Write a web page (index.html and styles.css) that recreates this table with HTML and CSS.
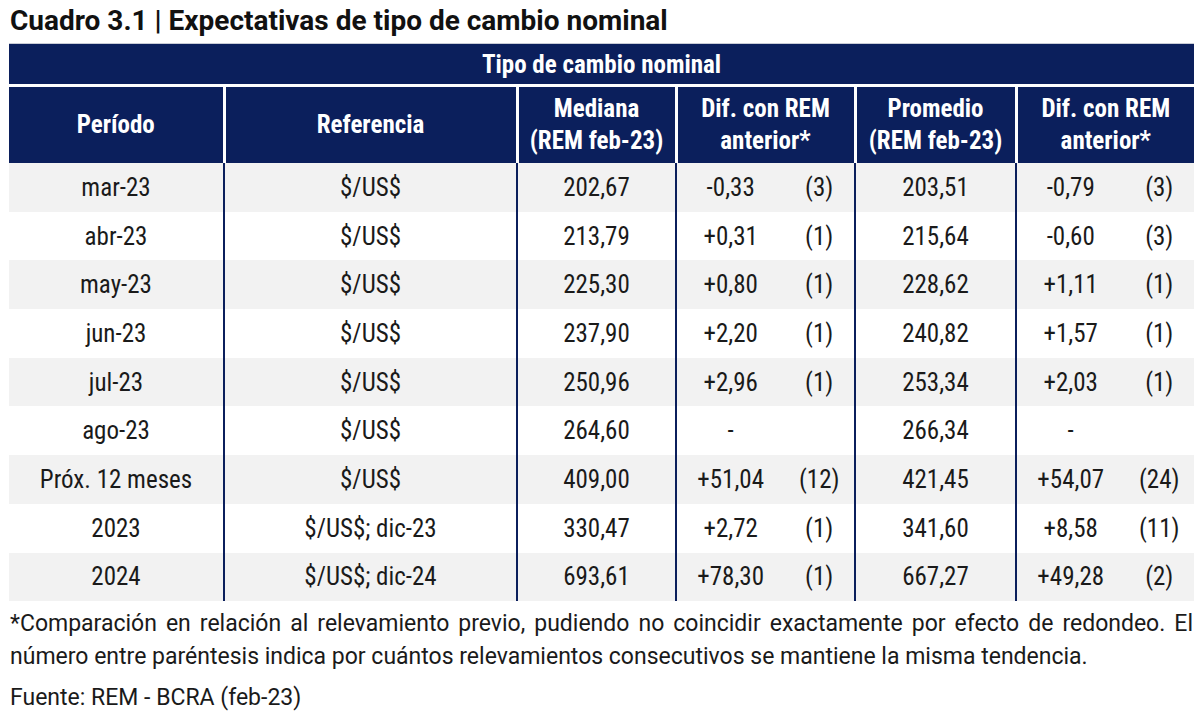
FILE: index.html
```html
<!DOCTYPE html>
<html lang="es">
<head>
<meta charset="utf-8">
<title>Cuadro 3.1</title>
<link rel="stylesheet" href="styles.css">
</head>
<body>
<div class="page">
  <h1 class="title">Cuadro 3.1 | Expectativas de tipo de cambio nominal</h1>
  <table class="tbl">
    <colgroup>
      <col class="c-per"><col class="c-ref"><col class="c-med"><col class="c-dif"><col class="c-prom"><col class="c-dif2">
    </colgroup>
    <thead>
      <tr class="h1row"><th colspan="6">Tipo de cambio nominal</th></tr>
      <tr class="h2row">
        <th>Período</th>
        <th>Referencia</th>
        <th>Mediana<br>(REM feb-23)</th>
        <th>Dif. con REM<br>anterior*</th>
        <th>Promedio<br>(REM feb-23)</th>
        <th>Dif. con REM<br>anterior*</th>
      </tr>
    </thead>
    <tbody>
      <tr class="g"><td>mar-23</td><td>$/US$</td><td>202,67</td><td><div class="dif"><span>-0,33</span><span>(3)</span></div></td><td>203,51</td><td><div class="dif"><span>-0,79</span><span>(3)</span></div></td></tr>
      <tr><td>abr-23</td><td>$/US$</td><td>213,79</td><td><div class="dif"><span>+0,31</span><span>(1)</span></div></td><td>215,64</td><td><div class="dif"><span>-0,60</span><span>(3)</span></div></td></tr>
      <tr class="g"><td>may-23</td><td>$/US$</td><td>225,30</td><td><div class="dif"><span>+0,80</span><span>(1)</span></div></td><td>228,62</td><td><div class="dif"><span>+1,11</span><span>(1)</span></div></td></tr>
      <tr><td>jun-23</td><td>$/US$</td><td>237,90</td><td><div class="dif"><span>+2,20</span><span>(1)</span></div></td><td>240,82</td><td><div class="dif"><span>+1,57</span><span>(1)</span></div></td></tr>
      <tr class="g"><td>jul-23</td><td>$/US$</td><td>250,96</td><td><div class="dif"><span>+2,96</span><span>(1)</span></div></td><td>253,34</td><td><div class="dif"><span>+2,03</span><span>(1)</span></div></td></tr>
      <tr><td>ago-23</td><td>$/US$</td><td>264,60</td><td><div class="dif"><span>-</span><span></span></div></td><td>266,34</td><td><div class="dif"><span>-</span><span></span></div></td></tr>
      <tr class="g"><td>Próx. 12 meses</td><td>$/US$</td><td>409,00</td><td><div class="dif"><span>+51,04</span><span>(12)</span></div></td><td>421,45</td><td><div class="dif"><span>+54,07</span><span>(24)</span></div></td></tr>
      <tr><td>2023</td><td>$/US$; dic-23</td><td>330,47</td><td><div class="dif"><span>+2,72</span><span>(1)</span></div></td><td>341,60</td><td><div class="dif"><span>+8,58</span><span>(11)</span></div></td></tr>
      <tr class="g"><td>2024</td><td>$/US$; dic-24</td><td>693,61</td><td><div class="dif"><span>+78,30</span><span>(1)</span></div></td><td>667,27</td><td><div class="dif"><span>+49,28</span><span>(2)</span></div></td></tr>
    </tbody>
  </table>
  <p class="note">*Comparación en relación al relevamiento previo, pudiendo no coincidir exactamente por efecto de redondeo. El número entre paréntesis indica por cuántos relevamientos consecutivos se mantiene la misma tendencia.</p>
  <p class="src">Fuente: REM - BCRA (feb-23)</p>
</div>
</body>
</html>
```
FILE: styles.css
```css
html, body {
  margin: 0;
  padding: 0;
  background: #ffffff;
}
body {
  font-family: Roboto, "Liberation Sans", sans-serif;
  color: #1a1a1a;
}
.page {
  padding: 0 6px 0 9px;
}
.title {
  margin: 0;
  padding: 6px 0 0 1px;
  height: 43px;
  box-sizing: border-box;
  font-family: Roboto, "Liberation Sans", sans-serif;
  font-size: 28px;
  font-weight: 700;
  line-height: 30px;
  color: #111111;
}
.tbl {
  width: 1185px;
  border-collapse: collapse;
  table-layout: fixed;
  border-top: 1px solid #c9ccd6;
  font-family: "Roboto Condensed", Roboto, "Liberation Sans", sans-serif;
  font-stretch: 75%;
}
.c-per { width: 215px; }
.c-ref { width: 293px; }
.c-med { width: 159px; }
.c-dif { width: 179px; }
.c-prom { width: 161px; }
.c-dif2 { width: 178px; }
.tbl th {
  background: #0b1f5c;
  color: #ffffff;
  font-weight: 700;
  font-size: 25px;
  text-align: center;
  padding: 0;
}
.h1row th {
  height: 40px;
  border-bottom: 3px solid #ffffff;
}
.h2row th {
  height: 76px;
  line-height: 32px;
  border-left: 3px solid #ffffff;
}
.h2row th:first-child {
  border-left: none;
}
.tbl td {
  height: 48.7px;
  padding: 0;
  font-size: 25px;
  text-align: center;
  border-left: 2px solid #0b1f5c;
}
.tbl td:first-child {
  border-left: none;
}
.tbl tr.g td {
  background: #f2f2f2;
}
.dif {
  display: flex;
}
.dif span:first-child {
  width: 108px;
  text-align: center;
}
.dif span:last-child {
  width: 70px;
  text-align: center;
}
.note {
  margin: 6px 0 0 1px;
  width: 1183px;
  font-size: 23px;
  line-height: 33px;
  text-align: justify;
}
.src {
  margin: 8px 0 0 1px;
  font-size: 23px;
  line-height: 33px;
}
```
